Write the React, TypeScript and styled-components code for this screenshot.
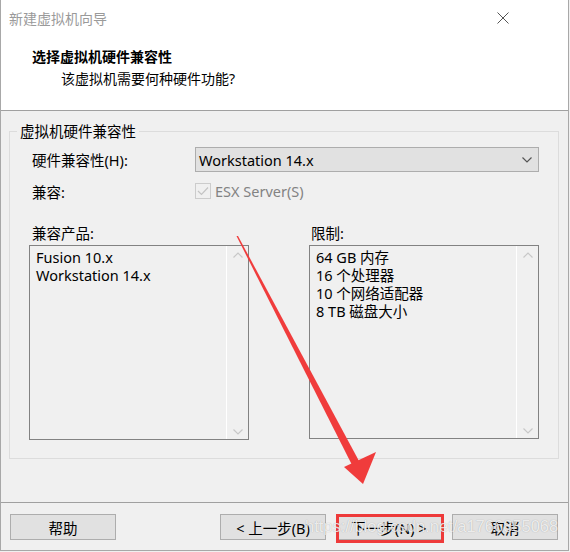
import React from "react";
import styled, { createGlobalStyle } from "styled-components";

const Global = createGlobalStyle`
  html, body { margin: 0; padding: 0; background: #f0f0f0; }
  body { width: 570px; height: 552px; overflow: hidden; }
  * { box-sizing: border-box; }
`;

const CJK = `"Noto Sans", "Noto Sans CJK SC", sans-serif`;

const Window = styled.div`
  position: relative;
  width: 569px;
  height: 551px;
  border-left: 1px solid #a8a8a8;
  border-right: 1px solid #a8a8a8;
  border-bottom: 1px solid #a8a8a8;
  background: #f0f0f0;
  font-family: ${CJK};
  font-size: 14px;
  color: #000;
  display: flex;
  flex-direction: column;
`;

const TitleBar = styled.div`
  height: 37px;
  background: #fff;
  display: flex;
  align-items: center;
  justify-content: space-between;
  padding: 0 0 2px 8px;
`;

const Title = styled.span`
  color: #9a9a9a;
  font-size: 14px;
`;

const CloseBtn = styled.div`
  width: 46px;
  height: 30px;
  margin-right: 42px;
  display: flex;
  align-items: center;
  justify-content: center;
`;

const Header = styled.div`
  height: 74px;
  background: #fff;
  border-bottom: 1px solid #a0a0a0;
  padding: 10px 0 0 31px;
  display: flex;
  flex-direction: column;
`;

const Heading = styled.div`
  font-weight: bold;
  font-size: 14px;
  line-height: 20px;
`;

const SubHeading = styled.div`
  font-size: 14px;
  line-height: 20px;
  margin-left: 29px;
  margin-top: 2px;
`;

const Body = styled.div`
  flex: 1;
  padding: 20px 0 0 8px;
  border-bottom: 1px solid #a0a0a0;
`;

const GroupBox = styled.div`
  position: relative;
  width: 550px;
  height: 328px;
  border: 1px solid #dcdcdc;
  padding: 15px 0 0 22px;
`;

const Legend = styled.span`
  position: absolute;
  top: -11px;
  left: 7px;
  padding: 0 3px;
  background: #f0f0f0;
  font-size: 14.5px;
  line-height: 20px;
`;

const Row = styled.div<{ $h: number; $mt?: number }>`
  display: flex;
  align-items: center;
  height: ${(p) => p.$h}px;
  margin-top: ${(p) => p.$mt ?? 0}px;
`;

const Label = styled.span<{ $w?: number }>`
  width: ${(p) => (p.$w ? `${p.$w}px` : "auto")};
  flex: none;
  font-size: 14.5px;
`;

const Combo = styled.div`
  width: 344px;
  height: 25px;
  background: #e1e1e1;
  border: 1px solid #adadad;
  display: flex;
  align-items: center;
  justify-content: space-between;
  padding: 0 6px 0 3px;
  font-size: 14.5px;
`;

const Check = styled.div`
  width: 16px;
  height: 16px;
  border: 1px solid #cccccc;
  background: #f0f0f0;
  display: flex;
  align-items: center;
  justify-content: center;
  margin-right: 4px;
`;

const Disabled = styled.span`
  color: #838383;
  font-size: 14.5px;
`;

const Lists = styled.div`
  display: flex;
  margin-top: 3px;
  margin-left: -3px;
  gap: 60px;
`;

const ListBox = styled.div<{ $w: number; $h: number }>`
  width: ${(p) => p.$w}px;
  height: ${(p) => p.$h}px;
  border: 1px solid #828282;
  display: flex;
`;

const ListItems = styled.div`
  flex: 1;
  padding: 2px 0 0 6px;
  font-size: 14.5px;
  line-height: 18px;
`;

const ScrollBar = styled.div`
  width: 22px;
  border-left: 1px solid #ffffff;
  display: flex;
  flex-direction: column;
  justify-content: space-between;
  align-items: center;
  padding: 6px 0 4px;
`;

const Footer = styled.div`
  height: 47px;
  display: flex;
  align-items: flex-start;
  padding: 11px 0 0 9px;
`;

const Button = styled.div<{ $ml?: number }>`
  position: relative;
  width: 106px;
  height: 26px;
  background: #e1e1e1;
  border: 1px solid #adadad;
  margin-left: ${(p) => p.$ml ?? 0}px;
  display: flex;
  align-items: center;
  justify-content: center;
  font-size: 14.5px;
`;

const Highlight = styled.div`
  position: absolute;
  left: -1px;
  top: -1px;
  width: 108px;
  height: 29px;
  border: 3px solid #ee3a3a;
`;

const Overlay = styled.svg`
  position: absolute;
  left: 0;
  top: 0;
  pointer-events: none;
`;

const Watermark = styled.span`
  position: absolute;
  left: 304px;
  top: 517px;
  font-family: "Liberation Sans", Arial, sans-serif;
  font-size: 16.5px;
  color: rgba(255, 255, 255, 0.8);
  text-shadow: 0 0 1px rgba(0, 0, 0, 0.3);
  pointer-events: none;
  white-space: nowrap;
`;

const Chevron = ({ dir, color }: { dir: "up" | "down"; color: string }) => (
  <svg width="10" height="6" viewBox="0 0 10 6">
    <path
      d={dir === "down" ? "M0.5 0.5 L5 5 L9.5 0.5" : "M0.5 5.5 L5 1 L9.5 5.5"}
      fill="none"
      stroke={color}
      strokeWidth="1.2"
    />
  </svg>
);

export default function App() {
  return (
    <>
      <Global />
      <Window>
        <TitleBar>
          <Title>新建虚拟机向导</Title>
          <CloseBtn>
            <svg width="12" height="12" viewBox="0 0 12 12">
              <path d="M0.5 0.5 L11.5 11.5 M11.5 0.5 L0.5 11.5" stroke="#555" strokeWidth="1" />
            </svg>
          </CloseBtn>
        </TitleBar>
        <Header>
          <Heading>选择虚拟机硬件兼容性</Heading>
          <SubHeading>该虚拟机需要何种硬件功能?</SubHeading>
        </Header>
        <Body>
          <GroupBox>
            <Legend>虚拟机硬件兼容性</Legend>
            <Row $h={25}>
              <Label $w={163}>硬件兼容性(H):</Label>
              <Combo>
                <span>Workstation 14.x</span>
                <Chevron dir="down" color="#555" />
              </Combo>
            </Row>
            <Row $h={20} $mt={9}>
              <Label $w={163}>兼容:</Label>
              <Check>
                <svg width="12" height="10" viewBox="0 0 12 10">
                  <path d="M1 5 L4.5 8.5 L11 1.5" fill="none" stroke="#c4c4c4" strokeWidth="1.2" />
                </svg>
              </Check>
              <Disabled>ESX Server(S)</Disabled>
            </Row>
            <Row $h={20} $mt={21}>
              <Label $w={279}>兼容产品:</Label>
              <Label>限制:</Label>
            </Row>
            <Lists>
              <ListBox $w={220} $h={195}>
                <ListItems>
                  <div>Fusion 10.x</div>
                  <div>Workstation 14.x</div>
                </ListItems>
                <ScrollBar>
                  <Chevron dir="up" color="#c8c8c8" />
                  <Chevron dir="down" color="#c8c8c8" />
                </ScrollBar>
              </ListBox>
              <ListBox $w={230} $h={194}>
                <ListItems>
                  <div>64 GB 内存</div>
                  <div>16 个处理器</div>
                  <div>10 个网络适配器</div>
                  <div>8 TB 磁盘大小</div>
                </ListItems>
                <ScrollBar>
                  <Chevron dir="up" color="#c8c8c8" />
                  <Chevron dir="down" color="#c8c8c8" />
                </ScrollBar>
              </ListBox>
            </Lists>
          </GroupBox>
        </Body>
        <Footer>
          <Button>帮助</Button>
          <Button $ml={104}>&lt; 上一步(B)</Button>
          <Button $ml={10}>
            下一步(N) &gt;
            <Highlight />
          </Button>
          <Button $ml={10}>取消</Button>
        </Footer>
        <Overlay width="570" height="552" viewBox="0 0 570 552">
          <polygon points="235.5,236 237,236 358,461 351,465" fill="#f03c3c" />
          <polygon points="343,467 375,452 362,484" fill="#f03c3c" />
        </Overlay>
        <Watermark>https://blog.csdn.net/a1766855068</Watermark>
      </Window>
    </>
  );
}
